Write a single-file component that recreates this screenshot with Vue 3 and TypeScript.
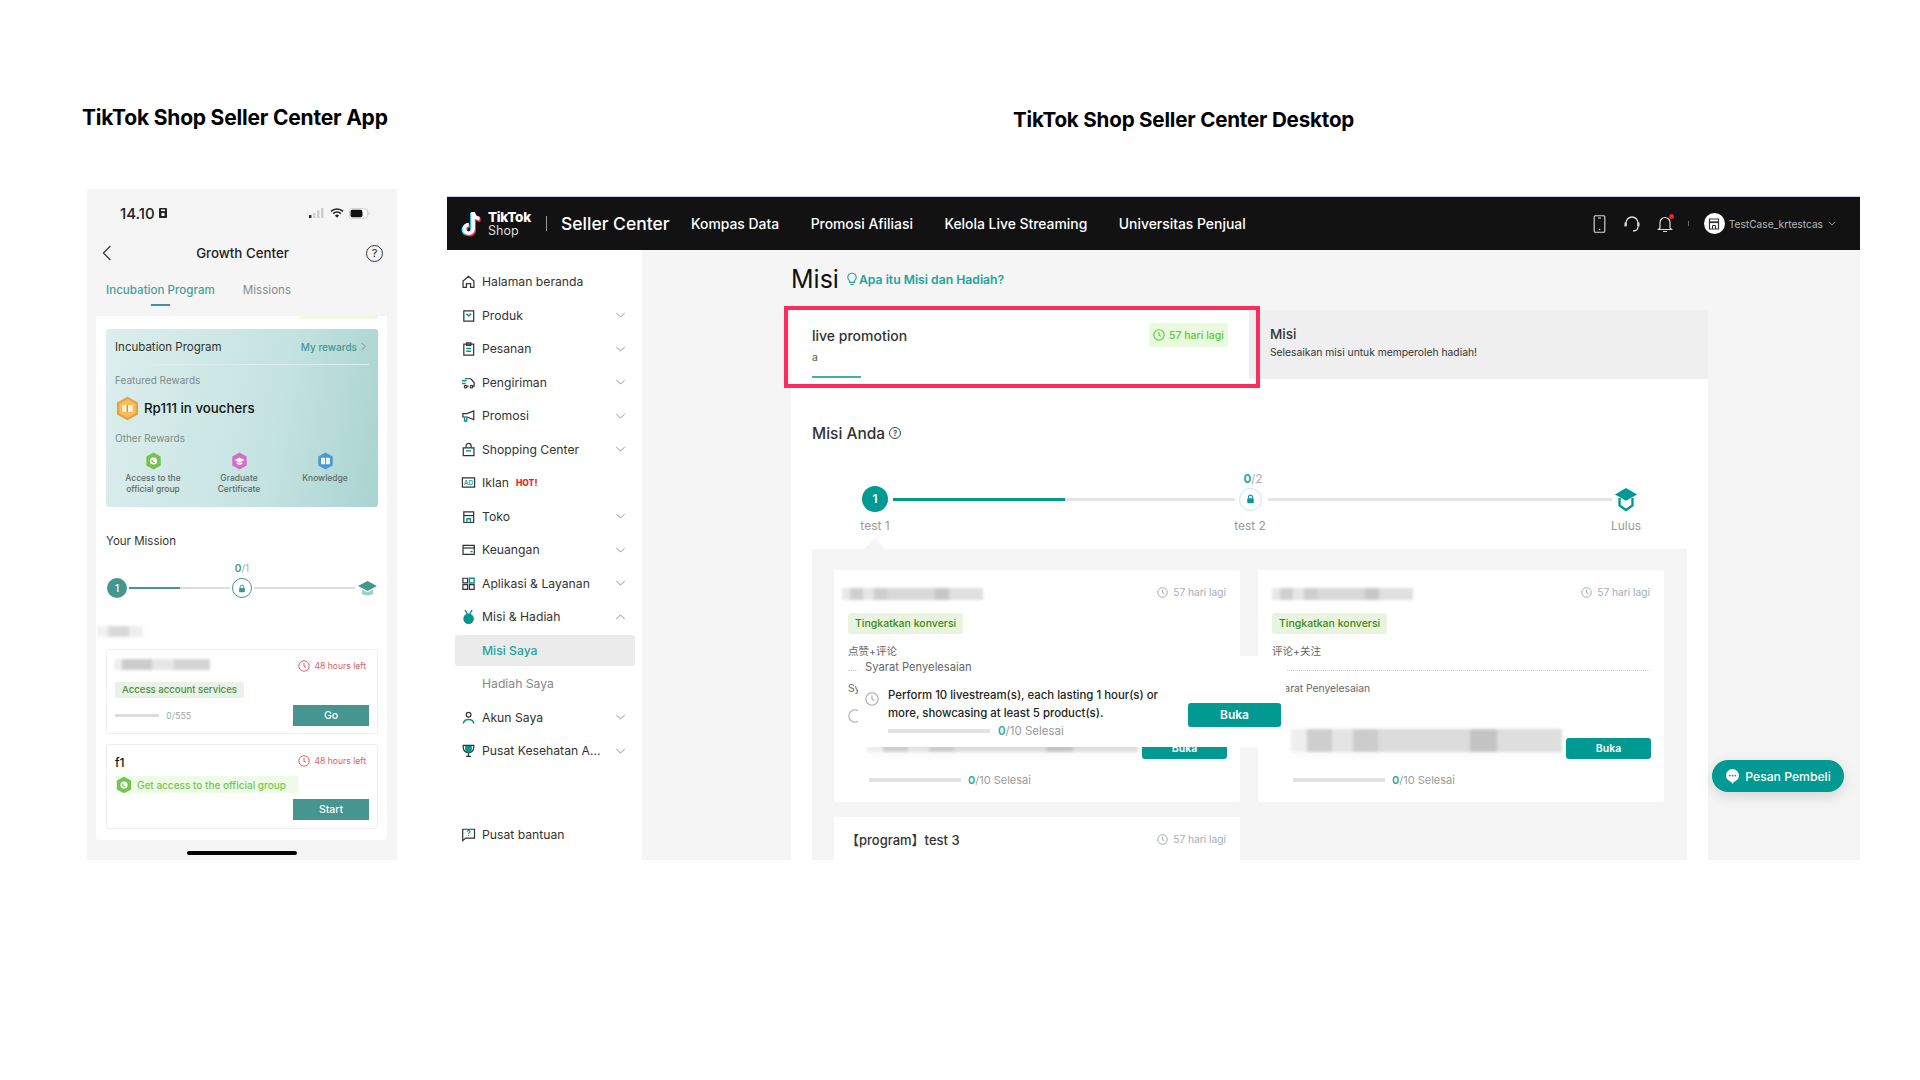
<script setup lang="ts">
interface Glyph { d: string; accent?: boolean; fill?: boolean }
interface MenuItem { label: string; icon: Glyph[]; chevron?: 'down' | 'up'; hot?: boolean; ad?: boolean; child?: boolean; active?: boolean }

const menu: MenuItem[] = [
  { label: 'Halaman beranda', icon: [{ d: 'M2.2 7.4 8 2.4l5.8 5v6.8h-3.6v-4H5.800v4H2.200z' }] },
  { label: 'Produk', chevron: 'down', icon: [{ d: 'M3 3h10.500v11H3z' }, { d: 'M5.600 6.200 8.200 8.400l2.600-2.200', accent: true }] },
  { label: 'Pesanan', chevron: 'down', icon: [{ d: 'M3 3.400h10.500V15H3z' }, { d: 'M6 2h4.500v2.800H6z' }, { d: 'M5.600 8h5.200M5.600 11h5.200', accent: true }] },
  { label: 'Pengiriman', chevron: 'down', icon: [{ d: 'M4 4h6.500l3.500 4v3.800h-1.600M8 11.800H6.400' }, { d: 'M1 6.200h5M1 9h4', accent: true }, { d: 'M3.500 12.400a1.400 1.400 0 1 0 2.800 0 1.400 1.400 0 1 0-2.800 0M9.800 12.400a1.400 1.400 0 1 0 2.800 0 1.400 1.400 0 1 0-2.800 0' }] },
  { label: 'Promosi', chevron: 'down', icon: [{ d: 'M2 6h4.400L13.600 3v9.400L6.400 9.600H2z' }, { d: 'M3.800 9.800v4h2.400v-3.400', accent: true }] },
  { label: 'Shopping Center', chevron: 'down', icon: [{ d: 'M2.400 6.200h11.400v8.400H2.400z' }, { d: 'M5.400 6.200V4.200a2.700 2.700 0 0 1 5.400 0v2' }, { d: 'M5.400 9.400h5.400', accent: true }] },
  { label: 'Iklan', hot: true, ad: true, icon: [{ d: 'M1.500 3h13v10h-13z' }] },
  { label: 'Toko', chevron: 'down', icon: [{ d: 'M3 3h10.500v11.400H3z' }, { d: 'M3 7h10.500' }, { d: 'M6.400 14.400v-4h3.600v4', accent: true }] },
  { label: 'Keuangan', chevron: 'down', icon: [{ d: 'M2.200 3.600h12v9.600h-12z' }, { d: 'M2.200 6.400h12' }, { d: 'M10 10.200h2.400', accent: true }] },
  { label: 'Aplikasi & Layanan', chevron: 'down', icon: [{ d: 'M2 2.400h5v5H2zM2 9.200h5v5H2zM9 9.200h5v5H9z' }, { d: 'M9 2.400h5v5H9z', accent: true }] },
  { label: 'Misi & Hadiah', chevron: 'up', icon: [{ d: 'M4.400 1.200 7 5.600M11.800 1.200 9.200 5.600', accent: true }, { d: 'M3.200 10.400a4.900 4.900 0 1 0 9.800 0 4.900 4.900 0 1 0-9.800 0', accent: true, fill: true }] },
  { label: 'Misi Saya', child: true, active: true, icon: [] },
  { label: 'Hadiah Saya', child: true, icon: [] },
  { label: 'Akun Saya', chevron: 'down', icon: [{ d: 'M5.600 5a2.500 2.500 0 1 0 5 0 2.500 2.500 0 1 0-5 0' }, { d: 'M2.400 14.400c.7-3 3-4.200 5.700-4.200s5 1.200 5.700 4.200', accent: true }] },
  { label: 'Pusat Kesehatan A...', chevron: 'down', icon: [{ d: 'M2.400 2.600h11.200v2.200a5.600 5.600 0 0 1-11.200 0z' }, { d: 'M5.200 4h5.600v2.800a2.800 2.800 0 0 1-5.600 0z', accent: true, fill: true }, { d: 'M8 10.600v3.200M5.400 14.200h5.200' }] },
]

const navLinks = ['Kompas Data', 'Promosi Afiliasi', 'Kelola Live Streaming', 'Universitas Penjual']
const rewards = [
  { lines: ['Access to the', 'official group'], kind: 'green' },
  { lines: ['Graduate', 'Certificate'], kind: 'pink' },
  { lines: ['Knowledge'], kind: 'blue' },
]
const missionCards = [
  { id: 'a', cn: '点赞+评论', req: 'Syarat Penyelesaian' },
  { id: 'b', cn: '评论+关注', req: 'Syarat Penyelesaian' },
]
</script>

<template>
  <div class="page">
    <section class="col-app">
      <h2 class="heading heading-app">TikTok Shop Seller Center App</h2>
      <div class="phone">
        <div class="status">
          <span class="clock">14.10</span>
          <svg class="sim" viewBox="0 0 8 10"><rect width="8" height="10" rx="1" fill="#222" /><rect x="2" y="1.500" width="4" height="1.600" fill="#fff" /><rect x="2.500" y="5" width="3" height="3" fill="#fff" /></svg>
          <span class="status-gap"></span>
          <svg class="signal" viewBox="0 0 16 10"><rect x="0" y="7" width="2.400" height="3" fill="#222" /><rect x="4" y="5" width="2.400" height="5" fill="#ccc" /><rect x="8" y="2.500" width="2.400" height="7.500" fill="#ccc" /><rect x="12" y="0" width="2.400" height="10" fill="#ccc" /></svg>
          <svg class="wifi" viewBox="0 0 14 10"><path d="M1 3.400a8.600 8.600 0 0 1 12 0M3.200 5.600a5.400 5.400 0 0 1 7.600 0" fill="none" stroke="#222" stroke-width="1.600" /><path d="M5 7.600a2.800 2.800 0 0 1 4 0L7 9.800z" fill="#222" /></svg>
          <svg class="battery" viewBox="0 0 22 11"><rect x=".5" y=".5" width="19" height="10" rx="3" fill="#fff" stroke="#ccc" /><rect x="1.600" y="1.600" width="12.500" height="7.800" rx="2" fill="#111" /><path d="M20.600 3.800c.8.3 1 1 1 1.700s-.2 1.400-1 1.700z" fill="#bbb" /></svg>
        </div>
        <div class="phone-head">
          <svg class="back" viewBox="0 0 10 16"><path d="M8.400 1 1.400 8l7 7" fill="none" stroke="#333" stroke-width="1.200" /></svg>
          <span class="phone-title">Growth Center</span>
          <span class="help-round">?</span>
        </div>
        <div class="phone-tabs">
          <div class="tab-on">Incubation Program<i class="tab-bar"></i></div>
          <div class="tab-off">Missions</div>
        </div>
        <div class="phone-panel">
          <div class="sliver"></div>
          <div class="incub">
            <div class="incub-head">
              <span class="incub-title">Incubation Program</span>
              <span class="incub-link">My rewards
                <svg class="mini-chev" viewBox="0 0 6 10"><path d="m1 1 4 4-4 4" fill="none" stroke="currentColor" stroke-width="1" /></svg>
              </span>
            </div>
            <div class="incub-label first">Featured Rewards</div>
            <div class="feature">
              <svg class="hex-big" viewBox="0 0 24 26"><path d="M12 .8 23 6.800v12.400L12 25.200 1 19.200V6.800z" fill="#e8a23c" /><path d="M12 3.400 20.600 8v10L12 22.600 3.400 18V8z" fill="#f5bd5c" /><rect x="6.500" y="9.500" width="11" height="7" fill="#fff2d6" /><rect x="11" y="9.500" width="1.500" height="7" fill="#d98f2b" /></svg>
              <span class="feature-text">Rp111 in vouchers</span>
            </div>
            <div class="incub-label">Other Rewards</div>
            <div class="reward-grid">
              <div v-for="r in rewards" :key="r.lines[0]" class="reward">
                <svg class="hex-small" :class="'hex-' + r.kind" viewBox="0 0 18 20">
                  <path class="hex-fill" d="M9 .6 17 5v10l-8 4.400L1 15V5z" />
                  <template v-if="r.kind === 'green'">
                    <circle cx="9" cy="10" r="4" fill="#fff" />
                    <path d="M7 8.500c.2 1.700 1.400 3 3.500 3.400" fill="none" stroke="#6fb845" stroke-width="1.200" />
                  </template>
                  <path v-else-if="r.kind === 'pink'" d="M9 6 14.500 9 9 12 3.500 9zM6 11.200v2l3 1.500 3-1.500v-2L9 12.800z" fill="#fff" />
                  <path v-else d="M4 6.500h4.500v7H4zM9.500 6.500H14v7H9.500z" fill="#fff" opacity=".9" />
                </svg>
                <span class="reward-label"><span v-for="l in r.lines" :key="l" class="reward-line">{{ l }}</span></span>
              </div>
            </div>
          </div>

          <div class="your-mission">Your Mission</div>
          <div class="frac-row"><b>0</b>/1</div>
          <div class="mini-track">
            <span class="mini-one">1</span>
            <span class="mini-line"><i></i></span>
            <span class="mini-lock">
              <svg viewBox="0 0 10 11"><path d="M2.800 5V3.400a2.200 2.200 0 0 1 4.400 0V5" fill="none" stroke="#46958f" stroke-width="1.200" /><rect x="1.400" y="4.800" width="7.200" height="5.400" rx="1" fill="#46958f" /></svg>
            </span>
            <span class="mini-line empty"></span>
            <svg class="mini-hat" viewBox="0 0 20 18"><path d="M10 1 20 6.400 10 11.600 0 6.400z" fill="#46958f" /><path d="M4 10v4.600c3.400 2.400 8.600 2.400 12 0V10l-6 3z" fill="#9fcfcb" /></svg>
          </div>
          <div class="blur blur-phone-a"></div>

          <div class="task">
            <div class="task-head">
              <div class="blur blur-phone-b"></div>
              <span class="left48">
                <svg class="clock-ico" viewBox="0 0 12 12"><circle cx="6" cy="6" r="5.200" fill="none" stroke="currentColor" /><path d="M6 3v3.200l2 1.200" fill="none" stroke="currentColor" /></svg>
                48 hours left
              </span>
            </div>
            <div class="task-tag">Access account services</div>
            <div class="task-foot">
              <span class="task-prog"></span>
              <span class="task-count"><b>0</b>/555</span>
              <span class="spacer"></span>
              <span class="task-btn">Go</span>
            </div>
          </div>

          <div class="task task-two">
            <div class="task-head head-two">
              <span class="f1">f1</span>
              <span class="left48">
                <svg class="clock-ico" viewBox="0 0 12 12"><circle cx="6" cy="6" r="5.200" fill="none" stroke="currentColor" /><path d="M6 3v3.200l2 1.200" fill="none" stroke="currentColor" /></svg>
                48 hours left
              </span>
            </div>
            <div class="task-tag-green">
              <svg class="hex-tag" viewBox="0 0 18 20"><path d="M9 .6 17 5v10l-8 4.400L1 15V5z" fill="#75c257" /><circle cx="9" cy="10" r="4" fill="#fff" /><path d="M7 8.500c.2 1.700 1.400 3 3.500 3.400" fill="none" stroke="#75c257" stroke-width="1.200" /></svg>
              Get access to the official group
            </div>
            <div class="task-foot foot-two">
              <span class="spacer"></span>
              <span class="task-btn">Start</span>
            </div>
          </div>
        </div>
        <div class="home-bar"></div>
      </div>
    </section>

    <section class="col-desk">
      <h2 class="heading heading-desk">TikTok Shop Seller Center Desktop</h2>
      <div class="desk">
        <header class="nav">
          <svg class="tt-logo" viewBox="2 0 20 25">
            <path d="M13 2v15.500a4 4 0 1 1-4-4" fill="none" stroke="#25f4ee" stroke-width="3.400" transform="translate(-1 .8)" />
            <path d="M13 2c.4 3.400 2.600 5.600 6 6" fill="none" stroke="#25f4ee" stroke-width="3.400" transform="translate(-1 .8)" />
            <path d="M13 2v15.500a4 4 0 1 1-4-4" fill="none" stroke="#fe2c55" stroke-width="3.400" transform="translate(1 1.400)" />
            <path d="M13 2c.4 3.400 2.600 5.600 6 6" fill="none" stroke="#fe2c55" stroke-width="3.400" transform="translate(1 1.400)" />
            <path d="M13 2v15.500a4 4 0 1 1-4-4" fill="none" stroke="#fff" stroke-width="3.400" />
            <path d="M13 2c.4 3.400 2.600 5.600 6 6" fill="none" stroke="#fff" stroke-width="3.400" />
          </svg>
          <span class="brand"><b>TikTok</b><span>Shop</span></span>
          <i class="brand-sep"></i>
          <span class="seller">Seller Center</span>
          <a v-for="l in navLinks" :key="l" class="nav-link">{{ l }}</a>
          <span class="spacer"></span>
          <svg class="nav-ico ico-phone" viewBox="0 0 12 18"><rect x=".7" y=".7" width="10.600" height="16.600" rx="1" fill="none" stroke="#ddd" stroke-width="1.100" /><path d="M4.500 3h3" stroke="#ddd" /><circle cx="6" cy="14.500" r=".8" fill="#ddd" /></svg>
          <svg class="nav-ico ico-head" viewBox="0 0 16 18"><path d="M2 11V8a6 6 0 0 1 12 0v3" fill="none" stroke="#ddd" stroke-width="1.300" /><path d="M1.500 7.500v4M14.500 7.500v4" stroke="#ddd" stroke-width="2" /><path d="M14 11.500c0 3-2 4.500-5 4.500" fill="none" stroke="#ddd" stroke-width="1.300" /></svg>
          <span class="bell">
            <svg class="nav-ico ico-bell" viewBox="0 0 16 18"><path d="M3 13V7.500a5 5 0 0 1 10 0V13l1.500 1.500h-13zM6 16.500h4" fill="none" stroke="#ddd" stroke-width="1.200" /></svg>
            <i class="bell-dot"></i>
          </span>
          <i class="user-sep"></i>
          <span class="avatar">
            <svg viewBox="0 0 12 12"><path d="M1.500 1h9v10h-9z" fill="none" stroke="#333" stroke-width="1.200" /><path d="M1.500 4.200h9" stroke="#333" stroke-width="1.800" /><path d="M4.500 11V7.500h3V11" fill="none" stroke="#333" /></svg>
          </span>
          <span class="user">TestCase_krtestcas</span>
          <svg class="user-chev" viewBox="0 0 10 6"><path d="m1 1 4 4 4-4" fill="none" stroke="#bbb" /></svg>
        </header>

        <div class="desk-body">
          <aside class="side">
            <div v-for="m in menu" :key="m.label" class="side-item" :class="{ child: m.child, active: m.active }">
              <svg v-if="!m.child" class="side-ico" viewBox="0 0 16 16">
                <path v-for="g in m.icon" :key="g.d" :d="g.d" :class="[g.accent ? 'ink-accent' : 'ink', { solid: g.fill }]" />
                <text v-if="m.ad" x="8" y="10.500" class="ad-text">AD</text>
              </svg>
              <span class="side-label">{{ m.label }}</span>
              <span v-if="m.hot" class="hot">HOT!</span>
              <span class="spacer"></span>
              <svg v-if="m.chevron" class="side-chev" :class="{ up: m.chevron === 'up' }" viewBox="0 0 12 7"><path d="m1 1 5 5 5-5" fill="none" stroke="#888" stroke-width="1" /></svg>
            </div>
            <div class="side-item side-help">
              <svg class="side-ico" viewBox="0 0 16 16">
                <path class="ink" d="M1.800 2.400h12.600v9.400H5L1.800 14.600z" />
                <text x="8" y="10" class="q-text">?</text>
              </svg>
              <span class="side-label">Pusat bantuan</span>
            </div>
          </aside>

          <main class="main">
            <div class="main-head">
              <h1 class="misi">Misi</h1>
              <svg class="bulb" viewBox="0 0 12 16"><path d="M6 1a5 5 0 0 0-3 9v2h6v-2a5 5 0 0 0-3-9zM4 14.500h4" fill="none" stroke="#23a39c" stroke-width="1.300" /></svg>
              <a class="help-link">Apa itu Misi dan Hadiah?</a>
            </div>
            <div class="sheet">
              <div class="tabs">
                <div class="tab-a">
                  <div class="tab-a-top">
                    <div class="tab-a-name">live promotion</div>
                    <span class="days-badge">
                      <svg viewBox="0 0 12 12"><circle cx="6" cy="6" r="5.200" fill="none" stroke="#5ec63c" stroke-width="1.100" /><path d="M6 3v3.200l2 1.200" fill="none" stroke="#5ec63c" stroke-width="1.100" /></svg>
                      57 hari lagi
                    </span>
                  </div>
                  <div class="tab-a-sub">a</div>
                  <i class="tab-a-bar"></i>
                </div>
                <div class="tab-b">
                  <div class="tab-b-name">Misi</div>
                  <div class="tab-b-sub">Selesaikan misi untuk memperoleh hadiah!</div>
                </div>
                <div class="red-frame"></div>
              </div>

              <div class="sheet-body">
                <div class="anda">Misi Anda
                  <span class="anda-help">?</span>
                </div>
                <div class="stepper">
                  <span class="frac"><b>0</b>/2</span>
                  <span class="step-one">1</span>
                  <span class="step-line"><i></i></span>
                  <span class="step-lock">
                    <svg viewBox="0 0 10 11"><path d="M2.800 5V3.400a2.200 2.200 0 0 1 4.400 0V5" fill="none" stroke="#009a93" stroke-width="1.200" /><rect x="1.400" y="4.800" width="7.200" height="5.400" rx="1" fill="#009a93" /></svg>
                  </span>
                  <span class="step-line second"></span>
                  <svg class="step-hat" viewBox="0 0 24 26"><path d="M12 1 24 8l-12 7L0 8z" fill="#009a93" /><path d="M5 12v8l7 5 7-5v-8" fill="none" stroke="#009a93" stroke-width="2.600" /></svg>
                  <span class="step-name n1">test 1</span>
                  <span class="step-name n2">test 2</span>
                  <span class="step-name n3">Lulus</span>
                </div>
                <div class="pointer"></div>
                <div class="board">
                  <div class="cards">
                    <article v-for="c in missionCards" :key="c.id" class="card" :class="'card-' + c.id">
                      <div class="card-head">
                        <div class="blur blur-title"></div>
                        <span class="time">
                          <svg viewBox="0 0 12 12"><circle cx="6" cy="6" r="5.200" fill="none" stroke="#9aa3ad" /><path d="M6 3v3.200l2 1.200" fill="none" stroke="#9aa3ad" /></svg>
                          57 hari lagi
                        </span>
                      </div>
                      <div class="tag">Tingkatkan konversi</div>
                      <div class="cn">{{ c.cn }}</div>
                      <div class="dots"></div>
                      <div class="req">{{ c.req }}</div>
                      <div class="req-row">
                        <svg class="req-clock" viewBox="0 0 14 14"><circle cx="7" cy="7" r="6.200" fill="none" stroke="#aaa" stroke-width="1.100" /></svg>
                        <div class="blur-wrap"><div class="blur blur-req"></div></div>
                        <span class="buka">Buka</span>
                      </div>
                      <div class="prog">
                        <i class="prog-bar"></i>
                        <span class="prog-text"><b>0</b>/10 Selesai</span>
                      </div>
                    </article>
                    <article class="card card-c">
                      <div class="card-head">
                        <span class="prog-name">【program】test 3</span>
                        <span class="time">
                          <svg viewBox="0 0 12 12"><circle cx="6" cy="6" r="5.200" fill="none" stroke="#9aa3ad" /><path d="M6 3v3.200l2 1.200" fill="none" stroke="#9aa3ad" /></svg>
                          57 hari lagi
                        </span>
                      </div>
                    </article>
                  </div>
                  <div class="popover">
                    <div class="pop-title">Syarat Penyelesaian</div>
                    <div class="pop-main">
                      <svg class="pop-clock" viewBox="0 0 14 14"><circle cx="7" cy="7" r="6.200" fill="none" stroke="#aaa" stroke-width="1.100" /><path d="M7 3.500v3.800l2.400 1.400" fill="none" stroke="#aaa" stroke-width="1.100" /></svg>
                      <div class="pop-body">
                        <p class="pop-text">Perform 10 livestream(s), each lasting 1 hour(s) or<br />more, showcasing at least 5 product(s).</p>
                        <div class="pop-prog"><i></i><span><b>0</b>/10 Selesai</span></div>
                      </div>
                      <span class="pop-btn">Buka</span>
                    </div>
                  </div>
                </div>
              </div>
            </div>
            <div class="chat">
              <svg viewBox="0 0 16 18"><path d="M8 1a7 7 0 0 0-7 7c0 3.500 3 6 5.500 6.600L8 17l1.500-2.400C12 14 15 11.500 15 8a7 7 0 0 0-7-7z" fill="#fff" /><circle cx="5" cy="8" r="1" fill="#009a93" /><circle cx="8" cy="8" r="1" fill="#009a93" /><circle cx="11" cy="8" r="1" fill="#009a93" /></svg>
              Pesan Pembeli
            </div>
          </main>
        </div>
      </div>
    </section>
  </div>
</template>

<style>
html, body { margin: 0; background: #fff; overflow: hidden; }
</style>

<style scoped>
.page { width: 1920px; height: 1080px; display: flex; background: #fff; overflow: hidden; font-family: Inter, "Noto Sans CJK SC", sans-serif; color: #222; }
.spacer { flex: 1; }
.heading { margin: 0; line-height: 26px; font-weight: 700; color: #000; white-space: nowrap; letter-spacing: -.2px; }
.col-app { margin-left: 87px; width: 310px; }
.heading-app { font-size: 21px; padding-top: 105px; margin-left: -5px; margin-bottom: 58px; }
.col-desk { margin-left: 50px; width: 1413px; }
.heading-desk { font-size: 20.600px; padding-top: 107px; margin-left: 566px; margin-bottom: 63px; }

/* phone */
.phone { height: 671px; background: #f5f5f5; overflow: hidden; }
.status { height: 48px; display: flex; align-items: center; padding: 0 27px 0 33px; }
.clock { font-size: 15px; font-weight: 500; }
.sim { width: 8px; height: 10px; margin-left: 4px; }
.status-gap { flex: 1; }
.signal { width: 16px; height: 10px; margin-right: 5px; }
.wifi { width: 14px; height: 10px; margin-right: 5px; }
.battery { width: 21px; height: 11px; }
.phone-head { height: 32px; display: grid; grid-template-columns: 1fr auto 1fr; align-items: center; padding: 0 14px 0 15px; }
.back { width: 10px; height: 16px; }
.phone-title { font-size: 13.300px; font-weight: 500; color: #222; }
.help-round { width: 15px; height: 15px; justify-self: end; border: 1px solid #333; border-radius: 50%; font-size: 11px; line-height: 15px; text-align: center; }
.phone-tabs { height: 47px; display: flex; gap: 28px; padding-left: 19px; font-size: 11.600px; line-height: 42px; }
.tab-on { position: relative; color: #4a9e99; font-weight: 500; }
.tab-bar { position: absolute; left: 45px; top: 35px; width: 19px; height: 2px; background: #46958f; }
.tab-off { color: #8a8a8a; }
.phone-panel { margin: 0 10px 0 9px; height: 524px; background: #fff; padding: 0 9px 0 10px; border-radius: 0 0 4px 4px; }
.sliver { height: 3px; width: 78px; margin-left: auto; background: #eef9e4; }
.incub { margin-top: 10px; height: 178px; border-radius: 3px; background: linear-gradient(100deg, #dcefed 0%, #c5e3e1 60%, #a9d4d1 100%); padding: 0 9px; }
.incub-head { height: 35px; display: flex; justify-content: space-between; align-items: center; border-bottom: 1px solid #dbeeed; }
.incub-title { font-size: 11.500px; color: #333; }
.incub-link { font-size: 10px; color: #3f9a94; font-weight: 500; display: flex; align-items: center; gap: 4px; padding-right: 3px; }
.mini-chev { width: 5px; height: 9px; }
.incub-label { font-size: 10px; line-height: 16px; color: #7d8a89; margin-top: 9px; }
.incub-label.first { margin-top: 7px; }
.feature { height: 26px; margin-top: 7px; display: flex; align-items: center; gap: 5px; margin-left: 1px; }
.hex-big { width: 23px; height: 25px; }
.feature-text { font-size: 13.300px; font-weight: 500; color: #111; }
.reward-grid { display: grid; grid-template-columns: repeat(3, 86px); margin: 6px 0 0 -5px; }
.reward { display: flex; flex-direction: column; align-items: center; }
.hex-small { width: 17px; height: 18px; }
.hex-green .hex-fill { fill: #7ac04f; }
.hex-pink .hex-fill { fill: #d86bc8; }
.hex-blue .hex-fill { fill: #4a9bcf; }
.reward-label { margin-top: 3px; text-align: center; font-size: 8.500px; line-height: 11px; color: #5f6a69; font-weight: 500; }
.reward-line { display: block; }
.your-mission { margin-top: 26px; font-size: 11.500px; line-height: 16px; color: #333; }
.frac-row { margin-top: 12px; text-align: center; font-size: 10px; line-height: 14px; color: #aaa; }
.frac-row b { color: #46958f; font-weight: 600; }
.mini-track { margin: 2px 0 0 1px; height: 22px; display: flex; align-items: center; gap: 2px; }
.mini-one { width: 20px; height: 20px; border-radius: 50%; background: #46958f; color: #fff; font-size: 10px; line-height: 20px; text-align: center; font-weight: 500; flex: none; }
.mini-line { width: 101px; height: 2px; background: #ddd; display: block; flex: none; }
.mini-line i { display: block; width: 51px; height: 2px; background: #46958f; }
.mini-lock { width: 18px; height: 18px; border: 1px solid #46958f; border-radius: 50%; display: flex; align-items: center; justify-content: center; flex: none; }
.mini-lock svg { width: 8px; height: 9px; }
.mini-hat { width: 19px; height: 17px; flex: none; margin-left: 1px; }
.blur { filter: blur(1.400px); }
.blur-phone-a { margin: 27px 0 0 -9px; width: 46px; height: 11px; background: linear-gradient(90deg, #f1f1f1 0 25%, #d9d9d9 25% 70%, #eee 70%); }
.task { margin-top: 12px; height: 85px; border: 1px solid #eee; border-radius: 3px; box-sizing: border-box; padding: 0 8px; }
.task-two { margin-top: 10px; }
.task-head { display: flex; justify-content: space-between; align-items: center; padding-top: 6px; height: 23px; box-sizing: border-box; }
.blur-phone-b { width: 96px; height: 11px; margin-left: -1px; background: linear-gradient(90deg, #eee 0 8%, #ccc 8% 40%, #e6e6e6 40% 62%, #d4d4d4 62%); }
.left48 { font-size: 8.600px; color: #e06060; display: flex; align-items: center; gap: 4px; padding-right: 3px; margin-top: 3px; }
.clock-ico { width: 12px; height: 12px; }
.task-tag { width: fit-content; margin-top: 9px; height: 16px; padding: 0 7px; line-height: 16px; background: #e8f2e8; color: #4f8c3f; font-size: 9.600px; font-weight: 500; border-radius: 2px; }
.task-foot { display: flex; align-items: center; height: 21px; margin-top: 7px; }
.task-prog { width: 44px; height: 3px; background: #ddd; }
.task-count { margin-left: 7px; font-size: 9px; color: #a5a5a5; }
.task-count b { color: #7fb9b5; font-weight: 400; }
.task-btn { width: 76px; height: 21px; background: #46958f; color: #fff; font-size: 10.500px; line-height: 21px; text-align: center; font-weight: 500; }
.head-two { padding-top: 11px; }
.head-two .left48 { margin-top: -2px; }
.f1 { font-size: 12px; font-weight: 500; color: #111; }
.task-tag-green { display: flex; align-items: center; gap: 5px; width: 182px; height: 17px; margin: 8px 0 0 1px; font-size: 10px; color: #74c555; background: #eefbe6; font-weight: 500; }
.hex-tag { width: 16px; height: 18px; flex: none; }
.foot-two { margin-top: 6px; }
.home-bar { width: 110px; height: 4px; border-radius: 2px; background: #000; margin: 11px 0 0 100px; }

/* desktop */
.desk { height: 664px; display: flex; flex-direction: column; }
.nav { height: 54px; flex: none; background: #121212; color: #fff; display: flex; align-items: center; padding: 0 24px 0 14px; border-top: 1px solid #c6d6e6; box-sizing: border-box; }
.tt-logo { width: 22px; height: 27px; flex: none; }
.brand { margin-left: 5px; display: flex; flex-direction: column; width: 50px; }
.brand b { font-size: 13.500px; line-height: 14px; font-weight: 800; letter-spacing: -.3px; }
.brand span { font-size: 12.500px; line-height: 13px; color: #ddd; }
.brand-sep { width: 1px; height: 15px; background: #999; margin: 0 14px 0 8px; }
.seller { font-size: 17.500px; font-weight: 500; width: 130px; flex: none; white-space: nowrap; }
.nav-link { font-size: 13.900px; font-weight: 500; margin-right: 31.500px; white-space: nowrap; }
.nav-ico { flex: none; }
.ico-phone { width: 13px; height: 18px; }
.ico-head { width: 16px; height: 18px; margin-left: 18px; }
.bell { position: relative; display: flex; margin-left: 17px; }
.ico-bell { width: 16px; height: 18px; }
.bell-dot { position: absolute; right: -1px; top: -1px; width: 5px; height: 5px; border-radius: 50%; background: #f02020; }
.user-sep { width: 1px; height: 5px; background: #666; margin: 0 15px; }
.avatar { width: 21px; height: 21px; border-radius: 50%; background: #fff; display: flex; align-items: center; justify-content: center; flex: none; }
.avatar svg { width: 12px; height: 12px; }
.user { font-size: 10.200px; color: #b9b9b9; margin-left: 4px; white-space: nowrap; }
.user-chev { width: 8px; height: 5px; margin-left: 5px; }
.desk-body { flex: 1; display: flex; min-height: 0; }
.side { width: 195px; flex: none; background: #fff; padding-top: 15px; box-sizing: border-box; }
.side-item { height: 33.500px; display: flex; align-items: center; padding: 0 16px 0 14px; box-sizing: border-box; }
.side-ico { width: 15px; height: 15px; margin-right: 6px; flex: none; overflow: visible; }
.ink { fill: none; stroke: #333; stroke-width: 1.300; }
.ink-accent { fill: none; stroke: #00958e; stroke-width: 1.500; }
.solid { fill: #00958e; }
.ad-text { font-size: 7px; font-weight: 600; fill: #1aa39c; text-anchor: middle; font-family: Inter, sans-serif; }
.q-text { font-size: 8px; font-weight: 700; fill: #00958e; text-anchor: middle; font-family: Inter, sans-serif; }
.side-label { font-size: 12.200px; color: #333; white-space: nowrap; }
.hot { font-size: 8.500px; font-weight: 800; color: #f01c2c; margin-left: 7px; }
.side-chev { width: 11px; height: 6px; }
.side-chev.up { transform: rotate(180deg); }
.child { padding-left: 35px; }
.child .side-label { color: #888; }
.active { height: 31px; margin: 1.250px 7px 1.250px 8px; padding-left: 27px; background: #ebebeb; border-radius: 3px; }
.active .side-label { color: #1fa59e; font-weight: 500; }
.side-help { margin-top: 50.500px; }
.main { flex: 1; position: relative; background: #f5f5f5; min-width: 0; padding-left: 149px; padding-right: 152px; overflow: hidden; }
.main-head { height: 60px; display: flex; align-items: center; padding-bottom: 2px; box-sizing: border-box; }
.misi { margin: 0; font-size: 25px; line-height: 32px; font-weight: 400; color: #111; width: 56px; flex: none; }
.bulb { width: 10px; height: 14px; margin-right: 2px; flex: none; }
.help-link { font-size: 12.200px; font-weight: 600; color: #23a39c; white-space: nowrap; }
.sheet { background: #fff; height: 550px; }
.tabs { position: relative; display: flex; height: 69px; }
.tab-a { width: 458px; flex: none; background: #fff; box-sizing: border-box; padding: 13px 21px 0; position: relative; }
.tab-a-top { display: flex; justify-content: space-between; align-items: center; height: 24px; }
.tab-a-name { font-size: 14px; font-weight: 500; color: #333; }
.days-badge { width: 79px; height: 24px; box-sizing: border-box; background: #e9fbdf; color: #5ec63c; font-size: 10.500px; font-weight: 500; display: flex; align-items: center; justify-content: center; gap: 4px; border-radius: 3px; }
.days-badge svg { width: 12px; height: 12px; }
.tab-a-sub { font-size: 10.500px; color: #555; margin-top: 4px; line-height: 14px; }
.tab-a-bar { position: absolute; left: 21px; bottom: 1px; width: 49px; height: 2px; background: #3fb1aa; }
.tab-b { flex: 1; background: #efefef; padding: 14px 0 0 21px; }
.tab-b-name { font-size: 13.500px; font-weight: 500; line-height: 20px; color: #333; }
.tab-b-sub { font-size: 10.300px; line-height: 16px; color: #333; white-space: nowrap; }
.red-frame { position: absolute; left: -7px; top: -4px; width: 476px; height: 82px; box-sizing: border-box; border: 4px solid #fb2d5c; pointer-events: none; }
.sheet-body { padding: 44px 21px 0 21px; }
.anda { height: 20px; display: flex; align-items: center; gap: 4px; font-size: 15.500px; font-weight: 500; color: #333; }
.anda-help { width: 10px; height: 10px; border: 1px solid #444; border-radius: 50%; font-size: 8px; line-height: 10px; text-align: center; }
.stepper { margin: 29px 0 0 45px; display: grid; grid-template-columns: 36px 342px 30px 347px 28px; grid-template-rows: 14px 26px 24px; justify-items: center; align-items: center; }
.frac { grid-column: 3; grid-row: 1; font-size: 11.500px; color: #aaa; white-space: nowrap; padding-left: 6px; }
.frac b { color: #2ea79f; font-weight: 700; }
.step-one { grid-column: 1; grid-row: 2; width: 26px; height: 26px; border-radius: 50%; background: #009a93; color: #fff; font-size: 12px; font-weight: 600; line-height: 26px; text-align: center; }
.step-line { grid-row: 2; grid-column: 2; width: 342px; height: 3px; background: #e4e4e4; display: block; margin-top: 1px; }
.step-line i { display: block; width: 172px; height: 3px; background: #009a93; }
.step-line.second { grid-column: 4; width: 344px; margin-left: 3px; }
.step-lock { grid-column: 3; grid-row: 2; width: 21px; height: 21px; border: 1px solid #c4e8e5; border-radius: 50%; display: flex; align-items: center; justify-content: center; }
.step-lock svg { width: 9px; height: 10px; }
.step-hat { grid-column: 5; grid-row: 2; width: 26px; height: 24px; }
.step-name { grid-row: 3; font-size: 12px; color: #999; white-space: nowrap; padding-top: 2px; }
.n1 { grid-column: 1; }
.n2 { grid-column: 3; }
.n3 { grid-column: 5; }
.pointer { width: 0; height: 0; margin-left: 52px; margin-top: 2px; border: 11px solid transparent; border-top: 0; border-bottom-color: #f5f5f5; }
.board { position: relative; height: 312px; background: #f5f5f5; padding: 21px 22px 0; box-sizing: border-box; overflow: hidden; }
.cards { display: grid; grid-template-columns: 406px 406px; column-gap: 18px; row-gap: 15px; }
.card { height: 232px; background: #fff; border-radius: 2px; padding: 17px 14px 0; box-sizing: border-box; }
.card-head { height: 14px; display: flex; align-items: center; justify-content: space-between; }
.blur-title { width: 141px; height: 12px; background: linear-gradient(90deg, #e8e8e8 0 6%, #cfcfcf 6% 15%, #e6e6e6 15% 23%, #cdcdcd 23% 32%, #d8d8d8 32% 66%, #c6c6c6 66% 76%, #dfdfdf 76%); }
.card-a .blur-title { margin-left: -6px; }
.time { font-size: 10.200px; color: #a5adb8; display: flex; align-items: center; gap: 5px; white-space: nowrap; margin-top: -4px; }
.time svg { width: 11px; height: 11px; }
.tag { width: fit-content; margin-top: 12px; height: 21px; line-height: 21px; padding: 0 7px; background: #e8f3e0; color: #3d8a12; font-size: 10.500px; font-weight: 500; border-radius: 3px; }
.cn { margin-top: 10px; font-size: 10.500px; line-height: 16px; color: #666; }
.dots { margin-top: 10px; border-top: 1px dotted #ccc; }
.req { margin-top: 8px; font-size: 10.300px; line-height: 18px; color: #666; }
.req-row { margin-top: 12px; height: 50px; display: flex; align-items: flex-end; position: relative; }
.req-clock { width: 14px; height: 14px; flex: none; margin: 0 5px 36px 0; }
.blur-wrap { width: 271px; height: 50px; padding-top: 20px; box-sizing: border-box; margin-right: 4px; flex: none; }
.blur-req { height: 23px; background: linear-gradient(90deg, #eee 0 6%, #cecece 6% 15%, #e4e4e4 15% 23%, #cccccc 23% 32%, #dcdcdc 32% 66%, #c4c4c4 66% 76%, #dedede 76%); box-shadow: 0 8px 12px rgba(0, 0, 0, .015); }
.buka { width: 85px; height: 21px; flex: none; background: #009a93; color: #fff; font-size: 10.500px; font-weight: 600; line-height: 21px; text-align: center; border-radius: 3px; }
.prog { margin: 13px 0 0 21px; height: 16px; display: flex; align-items: center; gap: 7px; }
.prog-bar { width: 92px; height: 4px; background: #e2e2e2; }
.prog-text { font-size: 11px; color: #999; }
.prog-text b { color: #2ea79f; font-weight: 600; }
.card-c { grid-column: 1; padding-top: 15px; }
.card-c .time { margin-top: 0; }
.prog-name { font-size: 13px; font-weight: 500; color: #333; white-space: nowrap; margin-left: -2px; }
.popover { position: absolute; left: 46px; top: 107px; width: 428px; height: 91px; background: #fff; box-sizing: border-box; padding: 2px 0 0 7px; }
.pop-title { font-size: 11.200px; line-height: 18px; color: #666; }
.pop-main { display: flex; margin-top: 10px; }
.pop-clock { width: 14px; height: 14px; margin: 6px 9px 0 0; flex: none; }
.pop-body { width: 300px; flex: none; }
.pop-text { margin: 0; font-size: 11.400px; font-weight: 500; line-height: 18px; color: #222; white-space: nowrap; }
.pop-prog { display: flex; align-items: center; gap: 8px; height: 17px; }
.pop-prog i { width: 102px; height: 4px; background: #e2e2e2; }
.pop-prog span { font-size: 11.500px; color: #999; }
.pop-prog b { color: #2ea79f; font-weight: 600; }
.pop-btn { width: 93px; height: 24px; flex: none; margin: 17px 0 0 0; background: #009a93; color: #fff; font-size: 12px; font-weight: 600; line-height: 24px; text-align: center; border-radius: 3px; }
.chat { position: absolute; right: 16px; top: 510px; width: 132px; height: 32px; border-radius: 16px; background: #009a93; color: #fff; font-size: 12.200px; font-weight: 500; display: flex; align-items: center; justify-content: center; gap: 5px; box-shadow: 0 4px 14px rgba(0, 0, 0, .14); white-space: nowrap; }
.chat svg { width: 15px; height: 17px; }
</style>
